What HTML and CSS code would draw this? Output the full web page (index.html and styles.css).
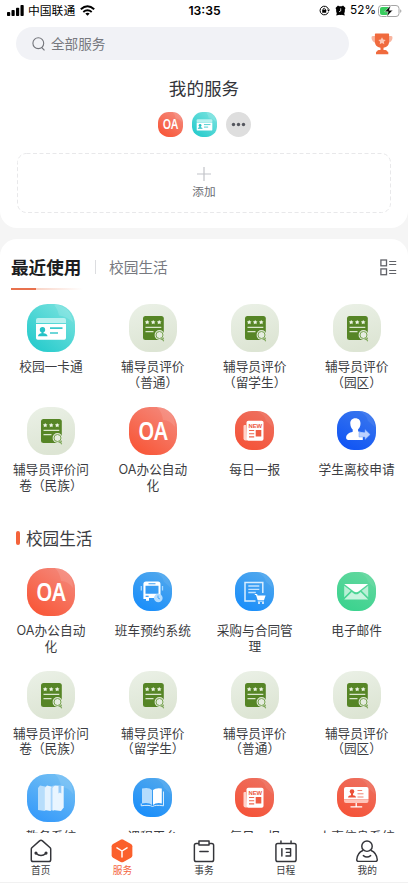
FILE: index.html
```html
<!DOCTYPE html>
<html lang="zh-CN">
<head>
<meta charset="utf-8">
<meta name="viewport" content="width=device-width, initial-scale=1">
<title>服务</title>
<link rel="stylesheet" href="styles.css">
</head>
<body>
<svg class="defs" width="0" height="0">
  <defs>
    <linearGradient id="g-red" x1="0" y1="1" x2=".7" y2="0"><stop offset="0" stop-color="#f9502f"/><stop offset="1" stop-color="#f48678"/></linearGradient>
    <linearGradient id="g-red2" x1="0" y1="1" x2=".5" y2="0"><stop offset="0" stop-color="#f64f33"/><stop offset="1" stop-color="#ee6d5b"/></linearGradient>
    <linearGradient id="g-teal" x1="0" y1="1" x2=".8" y2="0"><stop offset="0" stop-color="#1cc8ca"/><stop offset="1" stop-color="#78e2de"/></linearGradient>
    <linearGradient id="g-pale" x1="0" y1="0" x2=".3" y2="1"><stop offset="0" stop-color="#ebf1e7"/><stop offset="1" stop-color="#dde5d4"/></linearGradient>
    <linearGradient id="g-blue" x1="0" y1="1" x2=".5" y2="0"><stop offset="0" stop-color="#138bfc"/><stop offset="1" stop-color="#4ba5ee"/></linearGradient>
    <linearGradient id="g-sky" x1="0" y1="1" x2=".5" y2="0"><stop offset="0" stop-color="#2f96fb"/><stop offset="1" stop-color="#6dbcf4"/></linearGradient>
    <linearGradient id="g-royal" x1="0" y1="1" x2=".5" y2="0"><stop offset="0" stop-color="#0b50f5"/><stop offset="1" stop-color="#3573ee"/></linearGradient>
    <linearGradient id="g-green" x1="0" y1="1" x2=".5" y2="0"><stop offset="0" stop-color="#35d28c"/><stop offset="1" stop-color="#5fd79d"/></linearGradient>
  </defs>
  <symbol id="i-oa" viewBox="0 0 48 48">
    <rect width="48" height="48" rx="20.500" fill="url(#g-red)"/>
    <path d="M28 0q5 5 6 13 7 0 12 7Q46 2 28 0Z" fill="#fff" opacity=".1"/>
    <text x="9.300" y="33" class="oa" textLength="29.500" lengthAdjust="spacingAndGlyphs">OA</text>
  </symbol>
  <symbol id="i-card" viewBox="0 0 48 48">
    <rect width="48" height="48" rx="20.500" fill="url(#g-teal)"/>
    <path d="M27 .5q4 5 5 11 8 1 14 7Q44 2 27 .5Z" fill="#fff" opacity=".14"/>
    <path d="M9 19v-3q0-2 2-2h26q2 0 2 2v3Z" fill="#b9f1ef"/>
    <path d="M9 20h30v14q0 1.700-1.700 1.700H10.700Q9 35.700 9 34Z" fill="#fff"/>
    <circle cx="15.500" cy="25.800" r="2.700" fill="#25c2c6"/><path d="M14.500 27h2v2.200q3.800.4 4 3H11q.2-2.600 3.500-3Z" fill="#25c2c6"/>
    <path d="M23 24.200h12.500M23 29h8" stroke="#3cc9cb" stroke-width="1.700"/>
  </symbol>
  <symbol id="i-eval" viewBox="0 0 48 48">
    <rect width="48" height="48" rx="20.500" fill="url(#g-pale)"/>
    <rect x="14" y="12" width="20.800" height="24" rx="2.500" fill="#568526"/>
    <g fill="#eaf3e1"><path id="star" d="m18.200 15.900.8 1.400 1.500.3-1.100 1.100.3 1.600-1.500-.8-1.500.8.3-1.600-1.100-1.100 1.500-.3Z"/><use href="#star" x="6"/><use href="#star" x="12"/></g>
    <path d="M16.500 23.400h15.800M16.500 27.600h8" stroke="#dbe8ce" stroke-width="1.100"/>
    <circle cx="30.500" cy="31" r="4.900" fill="#e0e8d8"/>
    <circle cx="30.500" cy="31" r="3.500" fill="#e5ecdf" stroke="#77a350" stroke-width="1"/>
    <path d="m32.700 34 2 3.200" stroke="#79a453" stroke-width="1.100"/>
  </symbol>
  <symbol id="i-news" viewBox="0 0 39 39">
    <rect width="39" height="39" rx="17" fill="url(#g-red2)"/>
    <path d="M22 0q8 4 9 10l7 6Q36 1 22 0Z" fill="#fff" opacity=".07"/>
    <path d="M11 14H9.500q-1 0-1 1v12.500q0 2 2 2H12Z" fill="#ffd3ca"/>
    <rect x="11.500" y="9.800" width="17" height="20" rx="1.800" fill="#fff"/>
    <text x="13.400" y="17.200" class="new" textLength="13.800" lengthAdjust="spacingAndGlyphs">NEW</text>
    <path d="M14 19.500h5.200M14 22.700h5.200M14 25.900h5.200" stroke="#ee654e" stroke-width="1.100"/><rect x="20.700" y="19" width="5.600" height="6.500" fill="#ee5c43"/>
  </symbol>
  <symbol id="i-leave" viewBox="0 0 39 39">
    <rect width="39" height="39" rx="17" fill="url(#g-royal)"/>
    <path d="M22 0q8 4 9 10l7 6Q36 1 22 0Z" fill="#fff" opacity=".07"/>
    <path d="M18.300 7.300c-3.400 0-5.200 2.400-5 5.500.2 2.800 1.100 4.600 2.400 5.700v2.300c-3.500 1.100-6.300 2.200-6.600 5.800-.1 1.700.8 2.400 2.200 2.400h14.500v-7.800l-4.700-.700v-2.200c1.500-1.300 2.300-3 2.400-5.600.1-3.200-1.700-5.400-5.200-5.400Z" fill="#fff"/>
    <path d="M22 21.300h6v-2.800l5.200 5-5.200 5V26h-6Z" fill="#bcd1ff" stroke="#6d9cf7" stroke-width=".5"/>
  </symbol>
  <symbol id="i-bus" viewBox="0 0 39 39">
    <rect width="39" height="39" rx="17" fill="url(#g-blue)"/>
    <path d="M22 0q8 4 9 10l7 6Q36 1 22 0Z" fill="#fff" opacity=".07"/>
    <path d="M8.300 14v4.500M29.500 14v4.500" stroke="#a8d8ff" stroke-width="1.300"/>
    <path fill-rule="evenodd" d="M13 9.500h12q2.500 0 2.500 2.500v15H22l-1-1h-5v2.800h-3V27h-2.600V12q0-2.500 2.600-2.500Zm-.5 4.300v8h13v-8Zm3-2.500v1h7v-1Z" fill="#fff"/>
    <path d="M12.600 24.300h3" stroke="#2e98f8" stroke-width="1.200"/>
    <circle cx="25.300" cy="26" r="4.300" fill="#b5ddff"/><path d="M25 23.500V26l2 1" fill="none" stroke="#4ba9fb" stroke-width="1"/>
  </symbol>
  <symbol id="i-buy" viewBox="0 0 39 39">
    <rect width="39" height="39" rx="17" fill="url(#g-blue)"/>
    <path d="M22 0q8 4 9 10l7 6Q36 1 22 0Z" fill="#fff" opacity=".07"/>
    <path d="M27.800 21V10.500H10V29h10.500" fill="none" stroke="#d9eeff" stroke-width="1.500"/>
    <path d="M13.300 14h11M13.300 17.300h11M13.300 20.500h7.500" stroke="#c3e3ff" stroke-width="1.300"/>
    <path d="M19.800 22h2.300l.5 1.500h8L29 28.200h-6.300L21 23h-1.200Z" fill="#fff"/><path d="M22.800 29.300h6.200" stroke="#d8edff" stroke-width=".8"/><circle cx="24" cy="31" r="1" fill="#fff"/><circle cx="28" cy="31" r="1" fill="#fff"/>
  </symbol>
  <symbol id="i-mail" viewBox="0 0 39 39">
    <rect width="39" height="39" rx="17" fill="url(#g-green)"/>
    <path d="M22 0q8 4 9 10l7 6Q36 1 22 0Z" fill="#fff" opacity=".07"/>
    <path d="m7.200 13.800 6.500 5-6.500 6.400Zm24 0-6.500 5 6.500 6.400Z" fill="#b9f0d6"/>
    <path d="M7.200 12h24l-9.700 7.500q-2.300 1.600-4.600 0Z" fill="#fff"/>
    <path d="m7.200 27.500 7.600-7.500 1.900 1.400q2.500 1.700 5 0l1.900-1.400 7.600 7.500Z" fill="#c8f4df"/>
  </symbol>
  <symbol id="i-books" viewBox="0 0 48 48">
    <rect width="48" height="48" rx="20.500" fill="url(#g-sky)"/>
    <path d="M28 0q5 5 6 13 7 0 12 7Q46 2 28 0Z" fill="#fff" opacity=".1"/>
    <path d="m11 14 2-2.500 7.500 1.500v21l-2.500 3-7-1Z" fill="#b7ddfb"/>
    <path d="m17.800 14 2.200-2.500 6 1.500v21l-2.500 3-5.700-1Z" fill="#e6f3fe"/>
    <path d="m23.700 14 2.300-2.500 3 1V34l-2.500 3-2.800-1Z" fill="#a8d5fb"/>
    <path d="m25.500 14 2.200-2.500 9 .5v21.500l-2.700 3.500-8.500-1Z" fill="#e9f5ff"/><path d="M31.500 11.700v7.800l1.400-1 1.400 1v-7.600Z" fill="#93caf9"/>
  </symbol>
  <symbol id="i-course" viewBox="0 0 39 39">
    <rect width="39" height="39" rx="17" fill="url(#g-blue)"/>
    <path d="M22 0q8 4 9 10l7 6Q36 1 22 0Z" fill="#fff" opacity=".07"/>
    <path d="M9 10.500q7-1.500 10 1.500v15q-3-3-10-1.600Z" fill="#b4dcfd"/><path d="M28.800 10.500q-6-1-8.800 1.500v15q3-2.600 8.800-1.600Z" fill="#fff"/>
    <path d="M8.200 25.500v2.300q8-1.200 11.300.7 3-1.900 11-.7V13.500" fill="none" stroke="#d9eeff" stroke-width="1"/>
  </symbol>
  <symbol id="i-hr" viewBox="0 0 39 39">
    <rect width="39" height="39" rx="17" fill="url(#g-red2)"/>
    <path d="M22 0q8 4 9 10l7 6Q36 1 22 0Z" fill="#fff" opacity=".07"/>
    <path d="M7 21.500V11q0-2 2-2h20.500q2 0 2 2v10.500Z" fill="#fff"/><path d="M7 22h24.500v1q0 2-2 2H9q-2 0-2-2Z" fill="#ffc4b9"/>
    <path d="M19.200 25v3.200M13.500 28.800h11.700" stroke="#fff" stroke-width="1.300"/>
    <circle cx="15" cy="13.500" r="2.300" fill="#ec5138"/><path d="M14 15h2v2.200q3 .3 3 2.400h-8q0-2.100 3-2.400Z" fill="#ec5138"/>
    <path d="M20.500 12.500h4.700M20.500 15.800h6M20.500 19h6" stroke="#f08472" stroke-width="1"/>
  </symbol>
</svg>

<div class="app">
  <header class="top">
    <div class="status">
      <div class="carrier">
        <svg width="18" height="11" viewBox="0 0 18 11"><rect y="7" width="3.200" height="4" rx=".8"/><rect x="4.500" y="5" width="3.200" height="6" rx=".8"/><rect x="9" y="2.700" width="3.200" height="8.300" rx=".8"/><rect x="13.500" width="3.200" height="11" rx=".8"/></svg>
        <span>中国联通</span>
        <svg class="wifi" width="15" height="11" viewBox="0 0 15 11" fill="none" stroke="#000" stroke-width="2"><path d="M.8 4.200q6.700-5.800 13.400 0M3.300 7q4.200-3.400 8.400 0"/><path d="m7.500 10.800-2.200-2.200q2.200-1.700 4.400 0Z" fill="#000" stroke="none"/></svg>
      </div>
      <b class="clock">13:35</b>
      <div class="power">
        <svg width="11" height="11" viewBox="0 0 11 11"><path d="M9.300 7.300A4.300 4.300 0 1 1 9.400 4" fill="none" stroke="#000" stroke-width="1"/><path d="M8 4.500h3L9.600 6.800Z"/><rect x="3.200" y="4.800" width="4" height="3" rx=".4"/><path d="M4 5V4q1.200-1.700 2.400 0v1" fill="none" stroke="#000" stroke-width=".8"/></svg>
        <svg class="alarm" width="11" height="11" viewBox="0 0 11 11"><circle cx="5.500" cy="5.700" r="4.400"/><path d="m.5 3 2.500-2.500L5 2 1.500 5ZM10.500 3 8 .5 6 2l3.500 3ZM1.200 10.500l.8-3 2.500 2.300ZM9.800 10.500 9 7.500 6.500 9.800Z"/><path d="M5.700 3.300V6L4 6.800" fill="none" stroke="#fff" stroke-width=".8"/></svg>
        <span>52%</span>
        <svg class="battery" width="24" height="12" viewBox="0 0 24 12"><rect x=".5" y=".5" width="20.500" height="11" rx="3" fill="#fff" stroke="#a5a5a5"/><path d="M4 2h7v8H4q-2 0-2-2V4q0-2 2-2Z" fill="#38cc5e"/><path d="M22.200 4.200q1.200.4 1.200 1.800t-1.200 1.800Z" fill="#a5a5a5"/><path d="M12.800.3 6.700 6.700h3.500L8.600 11.800l6.200-6.500h-3.500Z" stroke="#fff" stroke-width=".5"/></svg>
      </div>
    </div>
    <div class="search-row">
      <div class="search">
        <svg width="14" height="14" viewBox="0 0 14 14" fill="none" stroke="#73757b" stroke-width="1.100"><circle cx="6.300" cy="6.200" r="5.400"/><path d="m9.700 10.500 2.800 2.800"/></svg>
        <span>全部服务</span>
      </div>
      <svg class="trophy" width="22" height="22" viewBox="0 0 22 22"><path d="M5 3H1.800Q.3 3 .5 5q.3 4 5 5.200ZM17 3h3.200q1.500 0 1.300 2-.3 4-5 5.200Z" fill="#f8b5a0"/><path d="M4.600.5h12.800q.7 0 .7.800v7.200q0 5.500-5.600 6.300V17h2q1.500 0 1.700 1.500h.3q.8 0 .8 1v1.700H5v-1.700q0-1 .8-1H6Q6.200 17 7.700 17h1.800v-2.200Q3.900 14 3.900 8.500V1.300q0-.8.700-.8Z" fill="#f06a3d"/><path d="m11 4.200 1.200 2.300 2.500.4-1.800 1.800.4 2.600L11 10.100l-2.300 1.200.4-2.600-1.800-1.800 2.500-.4Z" fill="#fcc8b6"/></svg>
    </div>
    <h1 class="title">我的服务</h1>
    <div class="mine">
      <svg width="25" height="25"><use href="#i-oa"/></svg>
      <svg width="25" height="25"><use href="#i-card"/></svg>
      <svg width="25" height="25" viewBox="0 0 25 25"><circle cx="12.500" cy="12.500" r="12.500" fill="#dedede"/><g fill="#54565e"><circle cx="7.500" cy="12.500" r="1.700"/><circle cx="12.500" cy="12.500" r="1.700"/><circle cx="17.500" cy="12.500" r="1.700"/></g></svg>
    </div>
    <div class="add">
      <svg class="add-frame" width="374" height="60"><rect x=".5" y=".5" width="373" height="59" rx="9" fill="none" stroke="#e8e8ea" stroke-dasharray="4 2.500"/></svg>
      <svg width="14" height="14" viewBox="0 0 14 14"><path d="M7 0v14M0 7h14" stroke="#c2c4c9" stroke-width="1.200"/></svg>
      <span>添加</span>
    </div>
  </header>

  <main class="panel">
    <div class="tabs">
      <b class="tab-on">最近使用</b>
      <i class="divider"></i>
      <span class="tab">校园生活</span>
      <svg class="view" width="17" height="17" viewBox="0 0 17 17" fill="none" stroke="#606268" stroke-width="1.300"><rect x=".9" y="1" width="5.600" height="5.800"/><rect x=".9" y="9.900" width="5.600" height="5.800"/><path d="M9.200 2.500h7M9.200 5.500h7M9.200 11.500h7M9.200 14.500h7" stroke-width="1.200"/></svg>
    </div>
    <div class="grid">
      <div class="item"><svg><use href="#i-card"/></svg><p>校园一卡通</p></div>
      <div class="item"><svg><use href="#i-eval"/></svg><p>辅导员评价<br>（普通）</p></div>
      <div class="item"><svg><use href="#i-eval"/></svg><p>辅导员评价<br>（留学生）</p></div>
      <div class="item"><svg><use href="#i-eval"/></svg><p>辅导员评价<br>（园区）</p></div>
      <div class="item"><svg><use href="#i-eval"/></svg><p>辅导员评价问<br>卷（民族）</p></div>
      <div class="item"><svg><use href="#i-oa"/></svg><p>OA办公自动<br>化</p></div>
      <div class="item"><svg class="small"><use href="#i-news"/></svg><p>每日一报</p></div>
      <div class="item"><svg class="small"><use href="#i-leave"/></svg><p>学生离校申请</p></div>
    </div>
    <h2 class="section">校园生活</h2>
    <div class="grid">
      <div class="item"><svg><use href="#i-oa"/></svg><p>OA办公自动<br>化</p></div>
      <div class="item"><svg class="small"><use href="#i-bus"/></svg><p>班车预约系统</p></div>
      <div class="item"><svg class="small"><use href="#i-buy"/></svg><p>采购与合同管<br>理</p></div>
      <div class="item"><svg class="small"><use href="#i-mail"/></svg><p>电子邮件</p></div>
      <div class="item"><svg><use href="#i-eval"/></svg><p>辅导员评价问<br>卷（民族）</p></div>
      <div class="item"><svg><use href="#i-eval"/></svg><p>辅导员评价<br>（留学生）</p></div>
      <div class="item"><svg><use href="#i-eval"/></svg><p>辅导员评价<br>（普通）</p></div>
      <div class="item"><svg><use href="#i-eval"/></svg><p>辅导员评价<br>（园区）</p></div>
      <div class="item"><svg><use href="#i-books"/></svg><p>教务系统</p></div>
      <div class="item"><svg class="small"><use href="#i-course"/></svg><p>课程平台</p></div>
      <div class="item"><svg class="small"><use href="#i-news"/></svg><p>每日一报</p></div>
      <div class="item"><svg class="small"><use href="#i-hr"/></svg><p>人事信息系统</p></div>
    </div>
  </main>

  <nav class="nav">
    <a><svg viewBox="0 0 24 26"><path d="M2 9.500 10.400 2q1.600-1.200 3.200 0L22 9.500q.6.600.6 1.500v11.500q0 2-2 2H3.400q-2 0-2-2V11q0-.9.600-1.500Z"/><path d="M6.500 15.500q5.500 5 11 0"/><circle cx="6.500" cy="15.300" r=".9"/><circle cx="17.500" cy="15.300" r=".9"/></svg>首页</a>
    <a class="on"><svg viewBox="0 0 24 26"><path class="fill" d="M10.500.7q1.500-.8 3 0l8.300 4.600q1.500.9 1.500 2.600v9.800q0 1.700-1.500 2.600l-8.300 4.600q-1.500.8-3 0l-8.300-4.600Q.7 19.400.7 17.700V7.900q0-1.700 1.500-2.600Z"/><path class="mark" d="M6.500 9.500 12 13l5.500-3.500M12 13v6.500"/></svg>服务</a>
    <a><svg viewBox="0 0 24 26"><rect x="1.500" y="4.800" width="21" height="19.700" rx="2"/><path class="clip" d="M6.500 2h11v4.500h-11Z"/><path d="M7.500 13.500h9"/></svg>事务</a>
    <a><svg viewBox="0 0 24 26"><rect x="1" y="4.800" width="22" height="19.700" rx="2"/><path d="M6.500 2v2.800M17.500 2v2.800M7.500 10.500v8M12 10.500h5v8h-5M12.500 14.500H17"/></svg>日程</a>
    <a><svg viewBox="0 0 24 26"><circle cx="12" cy="7.700" r="5.700"/><path d="M7.500 12.500Q1.500 15 .8 22.500q0 1.800 2 1.800h18.400q2 0 2-1.800Q22.500 15 16.500 12.500M8 18q4 3.200 8 0"/></svg>我的</a>
  </nav>
</div>
</body>
</html>
```
FILE: styles.css
```css
* { box-sizing: border-box; }
body {
  margin: 0;
  background: #f5f5f5;
  color: #3c3d42;
  font-family: "Noto Sans CJK SC", sans-serif;
}
svg { display: block; flex: none; }
.defs { position: absolute; }
.app { display: flex; flex-direction: column; width: 408px; height: 883px; overflow: hidden; }

.top { height: 228px; flex: none; background: #fff; border-radius: 0 0 17px 17px; }
.status {
  display: grid;
  grid-template-columns: 1fr auto 1fr;
  align-items: center;
  height: 21px;
  padding: 0 6px 0 7px;
  color: #000;
  font-size: 12px;
  line-height: 21px;
}
.carrier, .power { display: flex; align-items: center; }
.carrier span { margin: -1px 0 1px 3px; font-size: 11.800px; }
.wifi { margin-left: 5px; }
.clock { font: 600 12.200px/21px Inter, sans-serif; }
.power { justify-content: flex-end; }
.power span { margin: 0 2px 0 4px; font: 11.800px/21px Inter, sans-serif; }
.alarm { margin-left: 5px; }

.search-row { display: flex; align-items: center; gap: 22px; margin-top: 6px; padding-left: 16px; }
.search {
  display: flex;
  align-items: center;
  gap: 5px;
  width: 333px;
  height: 33px;
  padding-left: 16px;
  border-radius: 17px;
  background: #f1f2f6;
  color: #77797f;
  font-size: 13.600px;
}
.search span { margin-top: -2px; }
.title { margin: 14px 0 0; font-size: 17.600px; font-weight: 400; line-height: 28px; text-align: center; color: #333439; }
.mine { display: flex; justify-content: center; gap: 9px; margin-top: 10px; }
.add {
  position: relative;
  display: flex;
  flex-direction: column;
  align-items: center;
  height: 60px;
  margin: 16px 17px 0;
  padding-top: 14px;
  font-size: 11.700px;
  line-height: 20px;
  color: #6c6e74;
}
.add-frame { position: absolute; inset: 0; }

.panel { flex: 1; min-height: 0; margin-top: 11px; overflow: hidden; background: #fff; border-radius: 17px 17px 0 0; }
.tabs { display: flex; align-items: center; height: 51px; padding: 0 11px; }
.tab-on {
  align-self: stretch;
  padding-top: 15px;
  width: 72px;
  font-size: 17.600px;
  line-height: 26px;
  white-space: nowrap;
  color: #1c1d21;
  background: linear-gradient(90deg, #e8714d 25px, #f9d3c6 25px, #fff 72px) left bottom / 100% 2px no-repeat;
}
.divider { width: 1px; height: 14px; margin: 5px 13px 0 12px; background: #dcdde0; }
.tab { margin-top: 3px; font-size: 14.700px; color: #77797f; }
.view { margin: 6px 0 0 auto; }

.grid { display: grid; grid-template-columns: repeat(4, 101.900px); grid-auto-rows: 102.800px; }
.tabs + .grid { margin-top: 14px; }
.item { display: flex; flex-direction: column; align-items: center; }
.item svg { width: 48px; height: 48px; }
.item .small { width: 39px; height: 39px; margin: 4.500px 0; }
.item p { margin: 7px 0 0; font: 12.700px/15.700px Inter, "Noto Sans CJK SC", sans-serif; text-align: center; white-space: nowrap; }
.section {
  display: flex;
  align-items: center;
  gap: 6px;
  height: 24px;
  margin: 16.400px 0 18px 16px;
  font-size: 16.600px;
  font-weight: 400;
}
.section::before { content: ""; width: 4px; height: 14px; border-radius: 2px; background: #f4633a; }

.oa { font: 600 26px "Noto Sans", sans-serif; fill: #fff; }
.new { font: 700 6px "Liberation Sans", sans-serif; fill: #ec5a42; }

.nav { display: flex; flex: none; height: 50px; background: #fff; border-bottom: 1px solid #f1f1f1; }
.nav a { flex: 1; display: flex; flex-direction: column; align-items: center; padding-top: 6px; font-size: 9.700px; line-height: 15px; color: #3b3c41; }
.nav svg { width: 22px; height: 24px; fill: none; stroke: #34353a; stroke-width: 1.600; stroke-linecap: round; stroke-linejoin: round; }
.nav .on { color: #f4673f; }
.nav .fill { fill: #fb602c; stroke: none; }
.nav .mark { stroke: #fff; }
.nav .clip { fill: #fff; }
```
